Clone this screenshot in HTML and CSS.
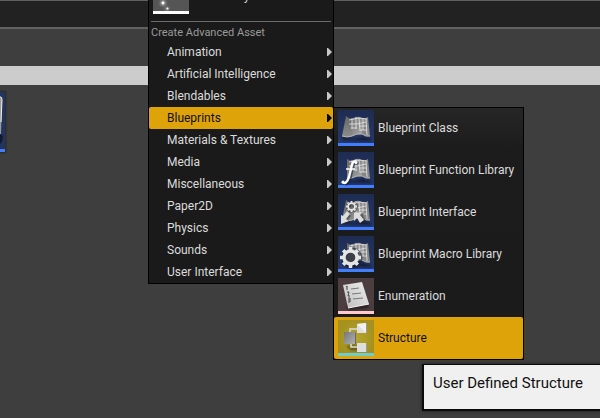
FILE: index.html
```html
<!DOCTYPE html>
<html lang="en">
<head>
<meta charset="utf-8">
<title>Content Browser</title>
<link rel="stylesheet" href="styles.css">
</head>
<body>
<svg class="defs" aria-hidden="true">
  <defs>
    <linearGradient id="navy" x1="0" y1="0" x2="0" y2="1"><stop offset="0" stop-color="#1d2c52"/><stop offset="1" stop-color="#263a6a"/></linearGradient>
    <linearGradient id="fold-a" x1="0" y1="0" x2="0" y2="1"><stop offset="0" stop-color="#666"/><stop offset="1" stop-color="#8d8d8d"/></linearGradient>
    <linearGradient id="fold-b" x1="0" y1="0" x2="1" y2="1"><stop offset="0" stop-color="#777"/><stop offset="1" stop-color="#a6a6a6"/></linearGradient>
    <linearGradient id="sheet" x1="1" y1="0" x2="0" y2="1"><stop offset="0" stop-color="#eee"/><stop offset="1" stop-color="#bdbdbd"/></linearGradient>
    <linearGradient id="block" x1="0" y1="0" x2="1" y2="1"><stop offset="0" stop-color="#777"/><stop offset="1" stop-color="#b0b0b0"/></linearGradient>
    <radialGradient id="olive"><stop offset="0" stop-color="#b5a62e"/><stop offset="1" stop-color="#a4911f"/></radialGradient>
    <filter id="soft" x="-30%" y="-30%" width="160%" height="160%"><feGaussianBlur stdDeviation="1"/></filter>
    <symbol id="map" viewBox="0 0 36 36">
      <rect width="36" height="36" fill="url(#navy)"/>
      <path d="M4 26 15 29 25 27 33 29 33 31 5 30Z" fill="#0c1226" opacity=".7" filter="url(#soft)"/>
      <path d="M8 6Q11 9 14 9L14 26Q9 28 4 26Z" fill="url(#fold-a)"/>
      <path d="M14 9Q19 5 24 8L24 24Q18 24 14 26Z" fill="url(#fold-b)"/>
      <path d="M24 8Q27 9 30 7L32 26Q28 27 24 24Z" fill="#858585"/>
      <path d="M4 26Q9 28 14 26 19 23 24 24 28 27 32 26" fill="none" stroke="#b5b5b5"/>
      <path d="M11 10 21 8 29 9M11 14H19L28 12M13 18H19M21 16 29 16M22 20 29 20M14 8 14 19M18 7 18 19M21 8 22 21M25 8 25 20M28 9 29 25" fill="none" stroke="#e6e6e6" opacity=".8"/>
    </symbol>
    <symbol id="gear" viewBox="-10 -10 20 20">
      <circle r="6.2" fill="none" stroke="#e6e6e6" stroke-width="3.2"/>
      <path d="M0-7V-10M0 7V10M-7 0H-10M7 0H10M5 5 7 7M-5 5-7 7M5-5 7-7M-5-5-7-7" stroke="#e6e6e6" stroke-width="3.400"/>
    </symbol>
    <symbol id="arrow" viewBox="0 0 5 8"><path d="M0 0H1L5 4 1 8H0Z" fill="currentColor"/></symbol>
  </defs>
</svg>

<div class="browser">
  <header class="toolbar"></header>
  <div class="path-bar"></div>
  <div class="search-bar"></div>
  <main class="assets">
    <div class="asset">
      <svg class="asset-art" viewBox="0 0 5 57" preserveAspectRatio="none" aria-hidden="true">
        <rect width="5" height="57" fill="#23355f"/>
        <path d="M0 42 3 44 2 50 0 52Z" fill="#101a33"/>
        <path d="M0 5Q2 5 2 8L1 42H0Z" fill="#999"/>
        <path d="M0 5H1Q2 6 2 8L1 30" fill="none" stroke="#f1f1f1"/>
      </svg>
    </div>
  </main>

  <div class="menu main-menu" role="menu">
    <button class="asset-item" role="menuitem">
      <svg class="thumb" viewBox="0 0 36 36" aria-hidden="true">
        <rect width="36" height="36" fill="#555"/>
        <g fill="#999" filter="url(#soft)"><circle cx="10" cy="25" r="3"/><circle cx="14" cy="31" r="2"/></g>
        <g fill="#fff"><circle cx="10" cy="25" r="1.4"/><circle cx="14.500" cy="30.500" r="1"/></g>
        <rect y="33" width="36" height="3" fill="#fff"/>
      </svg>
      <span>Particle System</span>
    </button>
    <h2 class="menu-heading">Create Advanced Asset</h2>
    <button class="item" role="menuitem">Animation<svg class="arrow" aria-hidden="true"><use href="#arrow"/></svg></button>
    <button class="item" role="menuitem">Artificial Intelligence<svg class="arrow" aria-hidden="true"><use href="#arrow"/></svg></button>
    <button class="item" role="menuitem">Blendables<svg class="arrow" aria-hidden="true"><use href="#arrow"/></svg></button>
    <button class="item active" role="menuitem" aria-expanded="true">Blueprints<svg class="arrow" aria-hidden="true"><use href="#arrow"/></svg></button>
    <button class="item" role="menuitem">Materials &amp; Textures<svg class="arrow" aria-hidden="true"><use href="#arrow"/></svg></button>
    <button class="item" role="menuitem">Media<svg class="arrow" aria-hidden="true"><use href="#arrow"/></svg></button>
    <button class="item" role="menuitem">Miscellaneous<svg class="arrow" aria-hidden="true"><use href="#arrow"/></svg></button>
    <button class="item" role="menuitem">Paper2D<svg class="arrow" aria-hidden="true"><use href="#arrow"/></svg></button>
    <button class="item" role="menuitem">Physics<svg class="arrow" aria-hidden="true"><use href="#arrow"/></svg></button>
    <button class="item" role="menuitem">Sounds<svg class="arrow" aria-hidden="true"><use href="#arrow"/></svg></button>
    <button class="item" role="menuitem">User Interface<svg class="arrow" aria-hidden="true"><use href="#arrow"/></svg></button>
  </div>

  <div class="menu sub-menu" role="menu">
    <button class="asset-item" role="menuitem">
      <svg class="thumb" viewBox="0 0 36 36" aria-hidden="true">
        <use href="#map"/>
        <rect y="33" width="36" height="3" fill="#437dff"/>
      </svg>
      <span>Blueprint Class</span>
    </button>
    <button class="asset-item" role="menuitem">
      <svg class="thumb" viewBox="0 0 36 36" aria-hidden="true">
        <use href="#map"/>
        <rect width="9" height="33" fill="url(#navy)"/>
        <rect y="33" width="36" height="3" fill="#437dff"/>
        <path d="M19 11C15 8 14 12 13 17L11 26C9 31 7 32 5 30" transform="translate(1 1)" fill="none" stroke="#18213c" stroke-width="3" opacity=".6"/>
        <path d="M18 10C15 8 14 12 13 17L11 25C9 31 7 32 4 30" fill="none" stroke="#fff" stroke-width="2.400"/>
        <path d="M8 17H17" stroke="#fff" stroke-width="1.500"/>
        <g fill="#fff"><circle cx="18" cy="10.500" r="1.500"/><circle cx="5" cy="30" r="1.500"/></g>
      </svg>
      <span>Blueprint Function Library</span>
    </button>
    <button class="asset-item" role="menuitem">
      <svg class="thumb" viewBox="0 0 36 36" aria-hidden="true">
        <use href="#map"/>
        <rect y="33" width="36" height="3" fill="#437dff"/>
        <circle cx="14" cy="13" r="6" fill="#333" opacity=".6"/>
        <use href="#gear" x="8" y="7" width="11" height="11"/>
        <path d="M9 18 12 21 9 24 11 27 3 29 4 21 6 23ZM17 19 25 18 24 21 27 26 23 29 20 24 17 27Z" fill="#222" opacity=".5" transform="translate(1 1)"/>
        <path d="M9 17 12 20 8 25 11 27 3 30 3 21 5 22ZM16 19 24 18 22 21 26 26 22 29 19 24 16 27Z" fill="#ddd"/>
      </svg>
      <span>Blueprint Interface</span>
    </button>
    <button class="asset-item" role="menuitem">
      <svg class="thumb" viewBox="0 0 36 36" aria-hidden="true">
        <use href="#map"/>
        <rect width="9" height="33" fill="url(#navy)"/>
        <rect y="33" width="36" height="3" fill="#437dff"/>
        <circle cx="14" cy="22" r="9" fill="none" stroke="#141c33" stroke-width="3" opacity=".6"/>
        <circle cx="13" cy="21" r="5" fill="#3c3f48"/>
        <use href="#gear" x="2" y="11" width="21" height="21"/>
      </svg>
      <span>Blueprint Macro Library</span>
    </button>
    <button class="asset-item" role="menuitem">
      <svg class="thumb" viewBox="0 0 36 36" aria-hidden="true">
        <rect width="36" height="36" fill="#4c3d40"/>
        <path d="M8 28 31 27 31 30 11 32Z" fill="#1b1315" opacity=".7" filter="url(#soft)"/>
        <path d="M5 7 24 4 31 26 10 30Z" fill="url(#sheet)"/>
        <path d="M10 30 31 26" stroke="#f2f2f2"/>
        <path d="M13 11 21 10M14 16 23 15M15 21 25 20" stroke="#777"/>
        <path d="M8 9 9 8V12M9 14H11L10 18H12M10 20H12V24H10M10 22H12" fill="none" stroke="#444"/>
        <rect y="33" width="36" height="3" fill="#ffc9cd"/>
      </svg>
      <span>Enumeration</span>
    </button>
    <button class="asset-item active" role="menuitem">
      <svg class="thumb" viewBox="0 0 36 36" aria-hidden="true">
        <rect width="36" height="36" fill="url(#olive)"/>
        <path d="M8 26 17 24 27 31 13 31Z" fill="#554c12" opacity=".7" filter="url(#soft)"/>
        <path d="M12 12V9H20M13 24V27H20" fill="none" stroke="#ddd" stroke-width="1.500"/>
        <path d="M6 12H17V24H6Z" fill="url(#block)"/>
        <path d="M17 12 18 13V24H17Z" fill="#666"/>
        <path d="M19 4 28 3V13L19 13ZM19 23H28V32L19 32Z" fill="#dedede"/>
        <path d="M19 4 28 3V13Z" fill="#f2f2f2"/>
        <path d="M28 3 29 4V13H28ZM28 23 29 24V32H28Z" fill="#999"/>
        <rect y="33" width="36" height="3" fill="#6fccc9"/>
      </svg>
      <span>Structure</span>
    </button>
  </div>

  <div class="tooltip" role="tooltip">User Defined Structure</div>
</div>
</body>
</html>
```
FILE: styles.css
```css
* { box-sizing: border-box; }

body {
  margin: 0;
  background: #3e3e3e;
  font-family: Roboto, "Liberation Sans", sans-serif;
  font-size: 12px;
  line-height: 16px;
}

.defs {
  position: absolute;
  width: 0;
  height: 0;
}

.browser {
  position: relative;
  min-height: 100vh;
  overflow: hidden;
}

.toolbar {
  height: 29px;
  background: #222;
  border-top: 1px solid #616161;
  border-bottom: 2px solid #616161;
}

.path-bar { height: 37px; }

.search-bar {
  height: 19px;
  background: #ccc;
}

.assets { padding-top: 7px; }

.asset {
  width: 5px;
  border-bottom: 3px solid #437dff;
  box-shadow: 0 0 2px 1px #292929;
}

.asset-art {
  display: block;
  width: 100%;
  height: 57px;
}

.menu {
  position: absolute;
  border: 1px solid #000;
  background: #1a1a1a;
  color: #dcdcdc;
}

.main-menu {
  top: -26px;
  left: 148px;
  width: 186px;
}

.sub-menu {
  top: 107px;
  left: 333px;
  width: 191px;
  background: linear-gradient(#262626, #1c1c1c 40px, #1a1a1a);
}

.sub-menu .asset-item:first-of-type { margin-top: -1px; }

.menu-heading {
  margin: 4px 2px 0;
  padding: 3px 0 0;
  border-top: 1px solid #6b6b6b;
  color: #9b9b9b;
  font-size: 11px;
  font-weight: 400;
}

.item,
.asset-item {
  display: flex;
  align-items: center;
  width: 100%;
  border: 0;
  border-radius: 2px;
  background: none;
  color: inherit;
  font: inherit;
  text-align: left;
}

.item {
  justify-content: space-between;
  height: 22px;
  padding: 0 1px 0 18px;
}

.asset-item {
  gap: 4px;
  height: 42px;
  padding: 0 4px;
  white-space: nowrap;
}

.active {
  background: #dea309;
  color: #111;
}

.arrow {
  width: 5px;
  height: 8px;
  color: #c8c8c8;
}

.active .arrow { color: #000; }

.thumb {
  flex: none;
  width: 36px;
  height: 36px;
}

.tooltip {
  position: absolute;
  top: 364px;
  right: -8px;
  left: 422px;
  padding: 9px 9px 16px;
  border: solid #0b0b0b;
  border-width: 1px 2px 2px;
  background: #f0f0f0;
  box-shadow: 0 0 3px #1c1c1c;
  color: #111;
  font-size: 15px;
  line-height: 19px;
  white-space: nowrap;
}
```
